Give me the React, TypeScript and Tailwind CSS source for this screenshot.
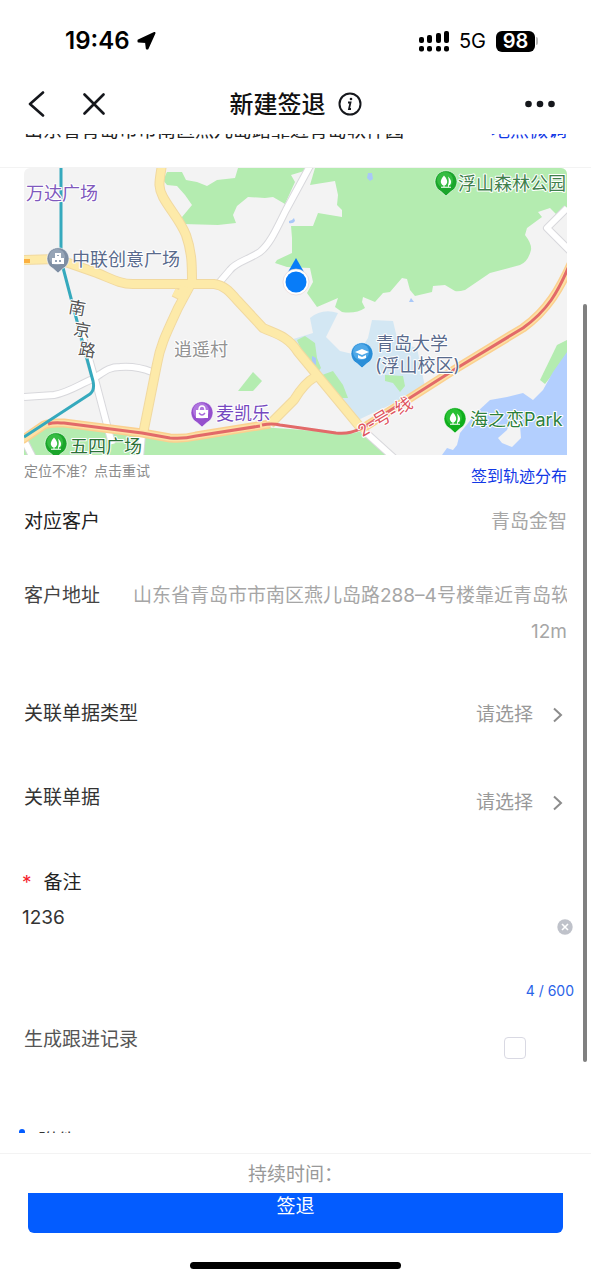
import { useState } from "react"
import type { ReactNode } from "react"

const GREEN = "#b4ecb0"
const YELLOW = "#fdeaa9"
const CASING = "#f1d9a0"

const MAX_LENGTH = 600

// yellow main roads of the map
const mainRoads = [
    "M138 -4 C136 12 133 18 139 29 C146 42 156 52 162 67 C168 84 168 98 168 114 L154 140 C142 166 136 178 133 196 L119 266",
    "M0 92 L33 91 L73 105 C88 111 96 116 109 116 L190 116 C200 117 206 124 213 132 L239 160 C252 166 264 168 274 184 L336 259",
    "M246 256 L270 232 C276 222 282 214 291 209",
    "M150 124 L158 128 L160 118",
]

const whiteRoads = [
    "M287 -4 L262 42 C252 62 246 76 236 84 C224 92 212 94 206 102 L194 116",
    "M0 229 L30 227 C46 224 56 216 69 211 C80 204 84 199 96 199 C108 198 118 200 128 204",
    "M58 166 L72 215 L88 276",
    "M543 40 L523 60 L547 84",
    "M339 262 L370 290",
    "M-2 268 L9 290",
    "M118 266 L116 290",
]

const metroRoads = [
    "M-2 272 L20 257 C26 254 34 255 40 255 L118 265 L146 270 C156 271 164 270 172 268 L246 256",
    "M336 262 L383 232 L433 200 L499 160 C524 142 536 120 547 96",
]

// signal bars: x and top of each
const signalBars = [
    { x: 0, top: 6 },
    { x: 8, top: 4 },
    { x: 17, top: 2 },
    { x: 25, top: 0 },
]

function Pin({ x, y, color, light, children }: { x: number; y: number; color: string; light: string; children: ReactNode }) {
    return (
        <g transform={`translate(${x} ${y})`}>
            <path d="M0 14 L-5 9.500 A11 11 0 1 1 5 9.500 Z" fill={color} stroke="#fff" strokeWidth="0.6" />
            <circle cx="-1" cy="-2" r="8" fill={light} opacity="0.55" />
            {children}
        </g>
    )
}

function Tree() {
    return (
        <g fill="#fff">
            <path d="M-2 -6.500C1 -3 1.500 -1 1 1Q0 3.500 -2 3.500T-5 1C-5.500 -1 -5 -3 -2 -6.500Z" />
            <path d="M2 -5.500C4.500 -3 5.500 -1 5 1Q4.500 3 2.800 3.500V5H2V3C3 0 3 -2 2 -5.500Z" />
            <path d="M-2.500 3h1v2h-1zM-5 4.800h10v1h-10z" />
        </g>
    )
}

function Map() {
    return (
        <svg
            viewBox="0 0 543 287"
            className="block h-auto w-full rounded-t-md"
            role="img"
            aria-label="地图"
            strokeLinejoin="round"
        >
            <rect width="543" height="287" fill="#f3f3f3" />

            {/* parks */}
            <g fill={GREEN}>
                <path d="M139 12 143 4 158 4 162 12 173 14 183 18 193 12 211 10 214 0 290 0 267 7 271 14 261 36 249 29 241 30 224 29 213 38 209 47 212 55 194 57 159 56 158 49 168 37 161 27 153 18 143 17Z" />
                <path d="M291 0H543V39L533 47 526 40 514 44 518 49 503 60 501 67Q508 76 507 82 504 94 496 97L466 105 441 122Q434 124 431 123L421 117 409 118 408 124 391 128 386 122 383 111 378 110 366 124 359 125 351 134 339 129 338 134 341 140Q332 146 318 144L311 139 314 130 293 139 283 125 289 114 286 100 263 99 251 95 253 92 268 85 268 70 267 58 289 58 294 45 318 49 318 42 313 37 314 27 311 13 286 17Z" />
                <path d="M0 270 23 257 40 256 118 266 159 272 236 259 266 261 326 266 338 263 363 287H0Z" />
                <path d="M214 223 229 204 238 213 229 223Z" />
            </g>
            <path d="M279 6 285 2 281 14 274 24 276 12Z" fill="#f3f3f3" />

            {/* campus */}
            <path
                d="M348 152 369 153 374 174 393 180 401 219 366 237 334 252 291 205 266 172 289 165 286 150Q298 140 314 145L302 169 316 183 333 187 344 170Z"
                fill="#d3e7f3"
            />
            <g fill={GREEN}>
                <path d="M273 172 281 168 291 175 293 190 297 200 292 206 286 196 279 186Z" />
                <path d="M298 207 309 203 319 217 324 230 316 230 300 212Z" />
                <path d="M361 207 379 208 381 218 376 224 369 215 361 213Z" />
            </g>

            {/* sea */}
            <path d="M516 212 533 177 543 172V188L521 216Z" fill={GREEN} />
            <path
                d="M543 184V287H418L423 280 429 282 433 277 436 265 453 244 466 232 483 229 499 225 509 232 519 222 529 204Z"
                fill="#b3cffe"
            />
            <path d="M474 270 483 262 486 254 496 257 497 270 488 279 478 275Z" fill="#f3f3f3" />
            <g fill="#a9c8f8">
                <path d="M344 5h4l1 6-3 2-3-3z" />
                <path d="M387 130l3 4h-5z" />
                <path d="M265 53q3 0 5-3l1 3q-2 3-6 2z" />
                <path d="M288 188l4 2v7l-4-2z" />
            </g>

            {/* roads */}
            <g fill="none">
                {whiteRoads.map((d) => <path key={d} d={d} stroke="#d8d8dc" strokeWidth="8" />)}
                {whiteRoads.map((d) => <path key={d} d={d} stroke="#fff" strokeWidth="6" />)}
                {mainRoads.map((d) => <path key={d} d={d} stroke={CASING} strokeWidth="10" />)}
                {metroRoads.map((d) => <path key={d} d={d} stroke="#fbd08f" strokeWidth="9" />)}
                {mainRoads.map((d) => <path key={d} d={d} stroke={YELLOW} strokeWidth="8" />)}
                {metroRoads.map((d) => <path key={d} d={d} stroke="#fde0a4" strokeWidth="6" />)}
                <path d="M0 93h6" stroke="#fbb040" strokeWidth="4" />
                <path
                    d="M24 256 C30 254 36 255 40 255 L118 265 L146 270 C156 271 164 270 172 268 L236 258 M238 257 Q248 255 256 257 L312 265 C324 266 330 264 340 259 L433 200 L499 160 C524 142 534 124 545 98"
                    stroke="#e26a69"
                    strokeWidth="3"
                />
                <path d="M37 0V92L59 176 69 213Q71 222 66 226L0 269" stroke="#35a9bd" strokeWidth="3" />
            </g>

            <Pin x={34} y={91} color="#7e8ea3" light="#a9b6c6">
                <path d="M-3 -6h6v5h3v6h-12v-6h3zM-1 -4v1h2v-1zM-3 1v2h2v-2zM1 1v2h2v-2z" fill="#fff" fillRule="evenodd" />
            </Pin>
            <Pin x={422} y={14} color="#1ba52b" light="#4bcf55"><Tree /></Pin>
            <Pin x={32} y={276} color="#1ba52b" light="#4bcf55"><Tree /></Pin>
            <Pin x={431} y={251} color="#0fae1c" light="#3ed048"><Tree /></Pin>
            <Pin x={178} y={245} color="#9550cd" light="#c793ee">
                <path d="M-6 -3h12v8h-12z" fill="#fff" />
                <path d="M-3 -3Q-3 -7 0 -7T3 -3" fill="none" stroke="#fff" strokeWidth="1.5" />
                <path d="M-3 0Q0 4 3 0" fill="none" stroke="#a868db" strokeWidth="1.3" />
            </Pin>
            <Pin x={338} y={186} color="#2b8fd8" light="#6fc0f5">
                <path d="M-7 -2 0 -5 7 -2 0 1ZM-4 1 0 3 4 1V4Q0 6 -4 4Z" fill="#fff" />
            </Pin>

            {/* labels */}
            <g fontSize="18" stroke="#fff" strokeWidth="2" paintOrder="stroke">
                <text x="2" y="32" fill="#8059bd">万达广场</text>
                <text x="48" y="98" fill="#596a8c">中联创意广场</text>
                <text x="434" y="22" fill="#3f7f4c">浮山森林公园</text>
                <text x="150" y="188" fill="#929292">逍遥村</text>
                <text x="192" y="252" fill="#7548c0">麦凯乐</text>
                <text x="46" y="285" fill="#2b7138">五四广场</text>
                <text x="352" y="182" fill="#596a8c">青岛大学</text>
                <text x="351" y="204" fill="#596a8c">(浮山校区)</text>
                <text x="446" y="258" fill="#2c7f3b">海之恋Park</text>
            </g>
            <g fontSize="17" fill="#555" stroke="#fff" strokeWidth="2" paintOrder="stroke" textAnchor="middle">
                <text transform="translate(52 146) rotate(10)">南</text>
                <text transform="translate(57 168) rotate(10)">京</text>
                <text transform="translate(62 188) rotate(10)">路</text>
                <text transform="translate(364 254) rotate(-31)" fill="#de5560">2-号-线</text>
            </g>

            {/* current position */}
            <path d="M272 90 280 104H264Z" fill="#087cf8" />
            <circle cx="272" cy="114" r="13" fill="#fff" stroke="#e3cdcd" strokeWidth="0.6" />
            <circle cx="272" cy="114" r="10.5" fill="#087cf8" />
        </svg>
    )
}

function StatusBar() {
    return (
        <div className="flex h-[74px] items-center justify-between pt-2 pr-[53px] pl-[65px] text-black">
            <div className="flex items-center gap-[7px]">
                <span className="text-2xl font-semibold">19:46</span>
                <svg width="19" height="19" viewBox="0 0 19 19" aria-hidden="true">
                    <path d="M17.500 1 10.500 16.500H9.800L9 10 1.500 9.500V8.500Z" fill="#000" stroke="#000" strokeWidth="2" strokeLinejoin="round" />
                </svg>
            </div>
            <div className="flex items-center gap-2.5">
                <svg width="30" height="21" viewBox="0 0 30 21" aria-hidden="true">
                    {signalBars.map(({ x, top }) => (
                        <g key={x}>
                            <rect x={x} y={top} width="5" height={12 - top} rx="2" />
                            <rect x={x} y="15" width="5" height="5.500" rx="2" />
                        </g>
                    ))}
                </svg>
                <span className="text-xl">5G</span>
                <div className="flex items-center gap-px">
                    <span className="flex h-[21px] w-[39px] items-center justify-center rounded-md bg-black text-xl font-semibold text-white">98</span>
                    <span className="h-2 w-0.5 rounded-r bg-[#bbbbbb]" />
                </div>
            </div>
        </div>
    )
}

function NavBar() {
    return (
        <header className="grid h-[60px] grid-cols-[1fr_auto_1fr] items-center">
            <div className="flex items-center gap-[38px] pl-7">
                <button aria-label="返回">
                    <svg width="17" height="26" viewBox="0 0 17 26" fill="none" stroke="#15171c" strokeWidth="2.600" strokeLinecap="round" strokeLinejoin="round">
                        <path d="M15 1.500 2 13 15 24.500" />
                    </svg>
                </button>
                <button aria-label="关闭">
                    <svg width="22" height="22" viewBox="0 0 22 22" fill="none" stroke="#15171c" strokeWidth="2.600" strokeLinecap="round">
                        <path d="M1.500 1.500l19 19M20.500 1.500l-19 19" />
                    </svg>
                </button>
            </div>
            <div className="flex items-center gap-3">
                <h1 className="pt-0.5 text-2xl font-medium text-[#111111]">新建签退</h1>
                <button aria-label="说明">
                    <svg width="24" height="24" viewBox="0 0 24 24" fill="none" stroke="#15171c" strokeWidth="2">
                        <circle cx="12" cy="12" r="10.500" />
                        <path d="M10 10.500h2.500L11 17h2" strokeWidth="1.800" />
                        <circle cx="13" cy="7" r="1.300" fill="#15171c" stroke="none" />
                    </svg>
                </button>
            </div>
            <div className="flex justify-end pr-9">
                <button aria-label="更多">
                    <svg width="30" height="8" viewBox="0 0 30 8" fill="#15171c">
                        <circle cx="3.500" cy="4" r="3.300" />
                        <circle cx="15" cy="4" r="3.300" />
                        <circle cx="26.500" cy="4" r="3.300" />
                    </svg>
                </button>
            </div>
        </header>
    )
}

function SelectRow({ id, label, className }: { id: string; label: string; className: string }) {
    return (
        <div className="flex h-[84px] items-center justify-between">
            <label htmlFor={id} className="text-[#333333]">{label}</label>
            <div className={`flex items-center gap-[18px] ${className}`}>
                <select id={id} className="appearance-none bg-transparent text-[#999999] outline-none">
                    <option>请选择</option>
                </select>
                <svg width="15" height="16" viewBox="0 0 15 16" fill="none" stroke="#8c8c8c" strokeWidth="2" aria-hidden="true">
                    <path d="M2 1.500 9 8 2 14.500" />
                </svg>
            </div>
        </div>
    )
}

function App() {
    const [remark, setRemark] = useState("1236")
    const [follow, setFollow] = useState(false)

    return (
        <div lang="zh-CN" className="relative flex min-h-screen flex-col bg-white font-['Inter','Noto_Sans_CJK_SC',sans-serif]">
            <StatusBar />
            <NavBar />

            <main className="text-[19px] leading-7">
                {/* address line, scrolled halfway under the nav bar */}
                <div className="h-[34px] border-b border-[#f3f3f3] px-6">
                    <div className="flex h-[11px] items-end justify-between overflow-hidden">
                        <span className="text-[#222222]">山东省青岛市市南区燕儿岛路靠近青岛软件园</span>
                        <a href="#adjust" className="text-[#1238e6]">地点微调</a>
                    </div>
                </div>

                <div className="px-6">
                    <Map />
                    <div className="flex h-[35px] justify-between pb-0.5">
                        <button className="self-start pt-1.5 text-sm text-[#8c8c8c]">定位不准&#xff1f;点击重试</button>
                        <a href="#track" className="self-end text-base text-[#1238e6]">签到轨迹分布</a>
                    </div>

                    <div className="flex h-16 items-center justify-between">
                        <span className="text-[#222222]">对应客户</span>
                        <span className="text-[#a6a6a6]">青岛金智</span>
                    </div>

                    <div className="flex gap-[33px] pt-6 leading-9">
                        <span className="shrink-0 text-[#444444]">客户地址</span>
                        <div className="min-w-0 flex-1 text-[#a6a6a6]">
                            <p className="overflow-hidden whitespace-nowrap">山东省青岛市市南区燕儿岛路288–4号楼靠近青岛软件园</p>
                            <p className="text-right">12m</p>
                        </div>
                    </div>

                    <div className="pt-[22px]">
                        <SelectRow id="docType" label="关联单据类型" className="pt-0.5" />
                        <SelectRow id="doc" label="关联单据" className="pt-2.5" />
                    </div>
                </div>

                <div className="pt-[25px] pr-[17px] pl-[22px]">
                    <label htmlFor="remark" className="flex gap-3 leading-9 text-[#222222]">
                        <span className="text-[#f5222d]">*</span>备注
                    </label>
                    <div className="flex h-[77px] items-start">
                        <textarea
                            id="remark"
                            className="h-full flex-1 resize-none leading-[34px] text-[#333333] outline-none"
                            maxLength={MAX_LENGTH}
                            value={remark}
                            onChange={(event) => setRemark(event.target.value)}
                        />
                        <button aria-label="清空" className="pt-[18px] pr-px" onClick={() => setRemark("")}>
                            <svg width="16" height="16" viewBox="0 0 16 16">
                                <circle cx="8" cy="8" r="7.700" fill="#bfc2ca" />
                                <path d="M5 5l6 6M11 5l-6 6" stroke="#fff" strokeWidth="1.600" />
                            </svg>
                        </button>
                    </div>
                    <p className="text-right text-sm leading-[26px] text-[#2a63e8]">{remark.length} / {MAX_LENGTH}</p>
                </div>

                <div className="flex h-[72px] items-center justify-between pr-[65px] pl-6">
                    <label htmlFor="follow" className="text-[#555555]">生成跟进记录</label>
                    <div className="flex pt-4">
                        <input
                            id="follow"
                            type="checkbox"
                            className="size-[22px] appearance-none rounded border border-[#d9d9e3] bg-white checked:bg-[#035cff]"
                            checked={follow}
                            onChange={(event) => setFollow(event.target.checked)}
                        />
                    </div>
                </div>

                {/* next section starts under the footer */}
                <div className="flex h-[57px] gap-[13px] overflow-hidden pt-[52px] pl-[19px]">
                    <span className="mt-px size-1.5 shrink-0 rounded-full bg-[#035cff]" />
                    <h2 className="text-[#333333]">附件</h2>
                </div>
            </main>

            <footer className="mt-5 border-t border-[#f3f3f3]">
                <p className="pt-0.5 text-center text-[19px] leading-[37px] text-[#999999]">持续时间&#xff1a;</p>
                <div className="px-7">
                    <button className="flex h-10 w-full justify-center rounded-b-md bg-[#035cff] text-[19px] leading-7 text-white">签退</button>
                </div>
                <div className="mx-auto mt-[29px] mb-[11px] h-[7px] w-[211px] rounded-full bg-black" />
            </footer>

            <div className="absolute top-[304px] right-1 h-[758px] w-1 rounded-full bg-[#808080]" />
        </div>
    )
}

export default App
